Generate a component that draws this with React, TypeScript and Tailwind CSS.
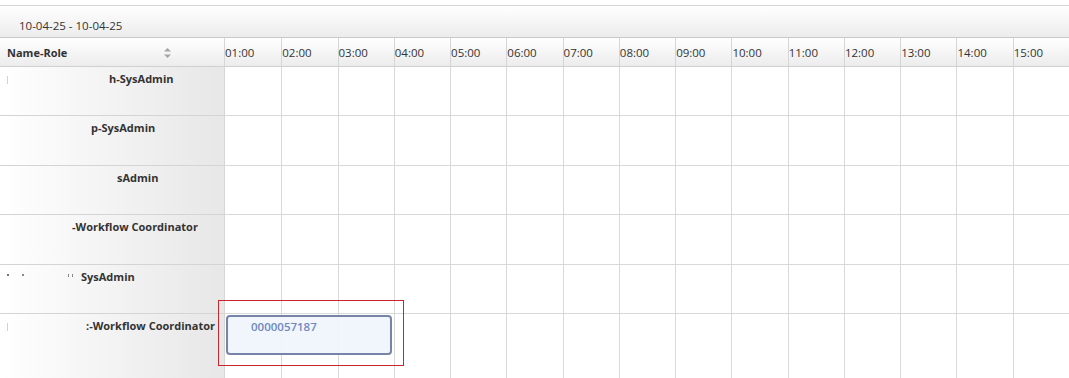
import React from "react";

const hours = ["01:00","02:00","03:00","04:00","05:00","06:00","07:00","08:00","09:00","10:00","11:00","12:00","13:00","14:00","15:00"];

const rows: { text: string; pl: string; h: string; mark?: "pink" | "dots" }[] = [
  { text: "h-SysAdmin", pl: "pl-[109px]", h: "h-[49px]", mark: "pink" },
  { text: "p-SysAdmin", pl: "pl-[91px]", h: "h-[50px]" },
  { text: "sAdmin", pl: "pl-[117px]", h: "h-[49px]" },
  { text: "-Workflow Coordinator", pl: "pl-[72px]", h: "h-[50px]" },
  { text: "SysAdmin", pl: "pl-[81px]", h: "h-[49px]", mark: "dots" },
  { text: ":-Workflow Coordinator", pl: "pl-[86px]", h: "h-[70px]", mark: "pink" },
];

function SortIcon() {
  return (
    <svg width="9" height="12" viewBox="0 0 9 12">
      <path d="M4.5 1 L8 4.5 L1 4.5 Z" fill="#a5a5a5" />
      <path d="M4.5 11 L8 7.5 L1 7.5 Z" fill="#a5a5a5" />
    </svg>
  );
}

export default function App() {
  return (
    <div className="w-[1069px] h-[378px] bg-white pt-[5px] overflow-hidden font-['Open_Sans',sans-serif] text-[#333]">
      <div className="border-t border-[#d6d6d6]">
        {/* toolbar */}
        <div className="h-[32px] flex items-center pl-[19px] pt-[8px] bg-linear-to-b from-white to-[#ececec] border-b border-[#c8c8c8] text-[11.5px]">
          10-04-25 - 10-04-25
        </div>
        {/* header */}
        <div className="flex h-[29px] border-b border-[#d0d0d0]">
          <div className="w-[225px] shrink-0 flex items-center justify-between pl-[7px] pr-[52px] pt-[2px] bg-linear-to-b from-white to-[#ececec] border-r border-[#d6d6d6]">
            <span className="text-[11px] font-bold">Name-Role</span>
            <SortIcon />
          </div>
          <div className="flex-1 grid grid-cols-15">
            {hours.map((h, i) => (
              <div
                key={h}
                className={`flex items-center pt-[2px] text-[11.5px] bg-linear-to-b from-white to-[#ececec] ${i > 0 ? "border-l border-[#d6d6d6]" : ""}`}
              >
                {h}
              </div>
            ))}
          </div>
        </div>
        {/* body */}
        <div className="relative flex">
          <div className="w-[225px] shrink-0 border-r border-[#d6d6d6]">
            {rows.map((r, i) => (
              <div
                key={i}
                className={`${r.h} ${r.pl} relative pt-[4px] bg-linear-to-r from-white to-[#e7e7e7] border-b border-[#d4d4d4] text-[11px] font-bold whitespace-nowrap`}
              >
                {r.mark === "pink" && (
                  <span className="absolute left-[7px] top-[9px] w-[1px] h-[8px] bg-[#f2c4c4]" />
                )}
                {r.mark === "dots" && (
                  <span className="absolute left-[7px] top-[9px] flex items-start gap-[13px]">
                    <span className="w-[2px] h-[2px] bg-[#777]" />
                    <span className="w-[2px] h-[2px] bg-[#888]" />
                    <span className="ml-[31px] w-[1px] h-[3px] bg-[#888]" />
                    <span className="-ml-[10px] w-[1px] h-[3px] bg-[#888]" />
                  </span>
                )}
                {r.text}
              </div>
            ))}
          </div>
          <div className="flex-1">
            {rows.map((r, i) => (
              <div key={i} className={`${r.h} grid grid-cols-15 ${i < rows.length - 1 ? "border-b border-[#d9d9d9]" : ""}`}>
                {hours.map((h, j) => (
                  <div key={h} className={j > 0 ? "border-l border-[#d9d9d9]" : ""} />
                ))}
              </div>
            ))}
          </div>
          {/* selection rectangle */}
          <div className="absolute left-[218px] top-[233px] w-[186px] h-[66px] border border-[#c8262c]" />
          {/* event */}
          <div className="absolute left-[226px] top-[248px] w-[166px] h-[40px] rounded-[4px] border-2 border-[#7883a8] bg-[#f0f5fd]/90 pl-[23px] pt-[1px] text-[11.5px] font-semibold text-[#6f88c0]">
            0000057187
          </div>
        </div>
      </div>
    </div>
  );
}
